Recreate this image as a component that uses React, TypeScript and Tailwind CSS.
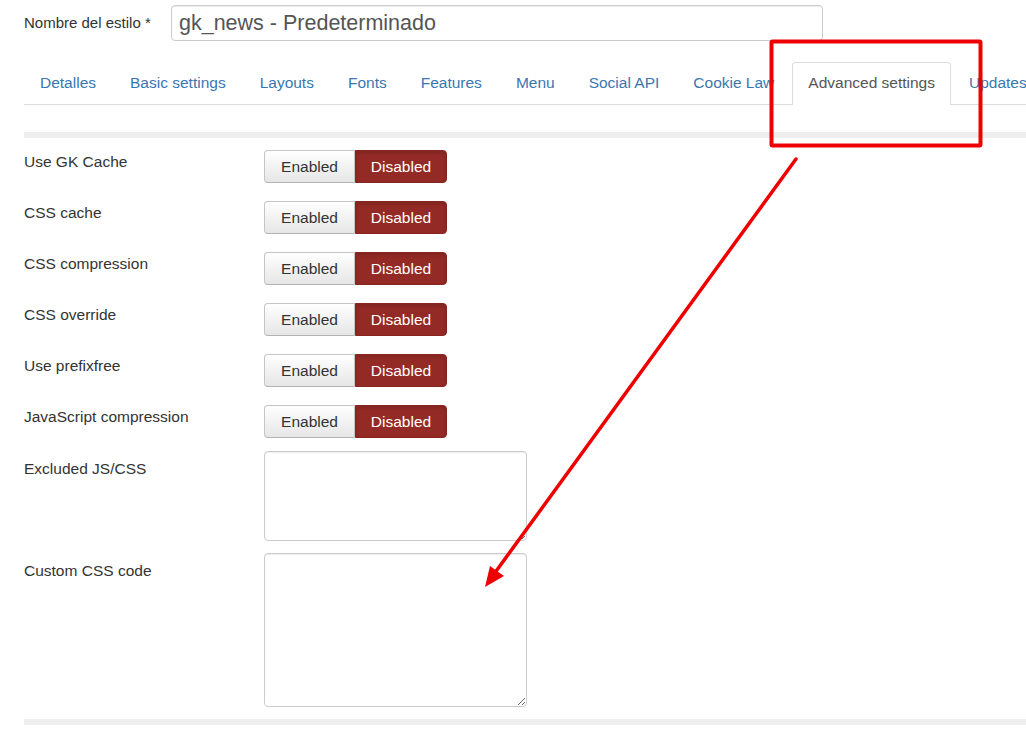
import clsx from 'clsx';

const tabs = [
  'Detalles',
  'Basic settings',
  'Layouts',
  'Fonts',
  'Features',
  'Menu',
  'Social API',
  'Cookie Law',
  'Advanced settings',
  'Updates',
];

const toggles = [
  'Use GK Cache',
  'CSS cache',
  'CSS compression',
  'CSS override',
  'Use prefixfree',
  'JavaScript compression',
];

function Toggle() {
  return (
    <div className="flex h-[33px] text-[15.5px]">
      <button
        type="button"
        className="w-[91px] h-full rounded-l-[4px] border border-[#c5c5c5] border-b-[#b3b3b3] bg-gradient-to-b from-white to-[#e6e6e6] text-[#333] shadow-[inset_0_1px_0_rgba(255,255,255,0.4)]"
      >
        Enabled
      </button>
      <button
        type="button"
        className="w-[92px] h-full rounded-r-[4px] border border-[#8a2420] bg-[#942a25] text-white shadow-[inset_0_2px_4px_rgba(0,0,0,0.15)]"
      >
        Disabled
      </button>
    </div>
  );
}

export default function App() {
  return (
    <div className="relative w-[1026px] h-[746px] overflow-hidden bg-white font-['Liberation_Sans',Arial,sans-serif] text-[#333]">
      <div className="pl-[24px] pt-[5px]">
        {/* Style name */}
        <div className="flex items-start">
          <label className="w-[147px] pt-[7px] text-[15px]">Nombre del estilo *</label>
          <div className="w-[652px] h-[36px] flex items-center rounded-[4px] border border-[#ccc] px-[7px] text-[21.5px] text-[#555] shadow-[inset_0_1px_1px_rgba(0,0,0,0.075)]">
            gk_news - Predeterminado
          </div>
        </div>

        {/* Tabs */}
        <nav className="mt-[21px] flex h-[43px] border-b border-[#ddd] whitespace-nowrap">
          {tabs.map((t) => {
            const active = t === 'Advanced settings';
            return (
              <a
                key={t}
                className={clsx(
                  'mr-[2px] flex items-center px-[15px] pb-[2px] text-[15.5px] rounded-t-[4px] border border-b-0',
                  active
                    ? 'border-[#ddd] bg-white text-[#555] -mb-px h-[43px]'
                    : 'border-transparent text-[#3a77b0]'
                )}
              >
                {t}
              </a>
            );
          })}
        </nav>

        <div className="mt-[27px] h-[6px] bg-[#eee]" />

        {/* Toggles */}
        <div className="mt-[12px] flex flex-col gap-[18px]">
          {toggles.map((t) => (
            <div key={t} className="flex items-start">
              <label className="w-[240px] text-[15.5px]">{t}</label>
              <Toggle />
            </div>
          ))}
        </div>

        <div className="mt-[13px] flex items-start">
          <label className="w-[240px] pt-[6px] text-[15.5px]">Excluded JS/CSS</label>
          <textarea className="w-[263px] h-[90px] rounded-[4px] border border-[#ccc] shadow-[inset_0_1px_1px_rgba(0,0,0,0.075)] outline-none" />
        </div>

        <div className="mt-[12px] flex items-start">
          <label className="w-[240px] pt-[6px] text-[15.5px]">Custom CSS code</label>
          <textarea className="w-[263px] h-[154px] rounded-[4px] border border-[#ccc] shadow-[inset_0_1px_1px_rgba(0,0,0,0.075)] outline-none" />
        </div>

        <div className="mt-[12px] h-[6px] bg-[#eee]" />
      </div>

      {/* Annotation overlay */}
      <svg className="absolute inset-0 pointer-events-none" width="1026" height="746">
        <rect x="771.5" y="41.5" width="209" height="104" fill="none" stroke="#ee0000" strokeWidth="4" rx="1" />
        <line x1="796" y1="159" x2="494" y2="574" stroke="#ee0000" strokeWidth="3.5" strokeLinecap="round" />
        <polygon points="485,587 490,566 504,576" fill="#ee0000" />
      </svg>
    </div>
  );
}
